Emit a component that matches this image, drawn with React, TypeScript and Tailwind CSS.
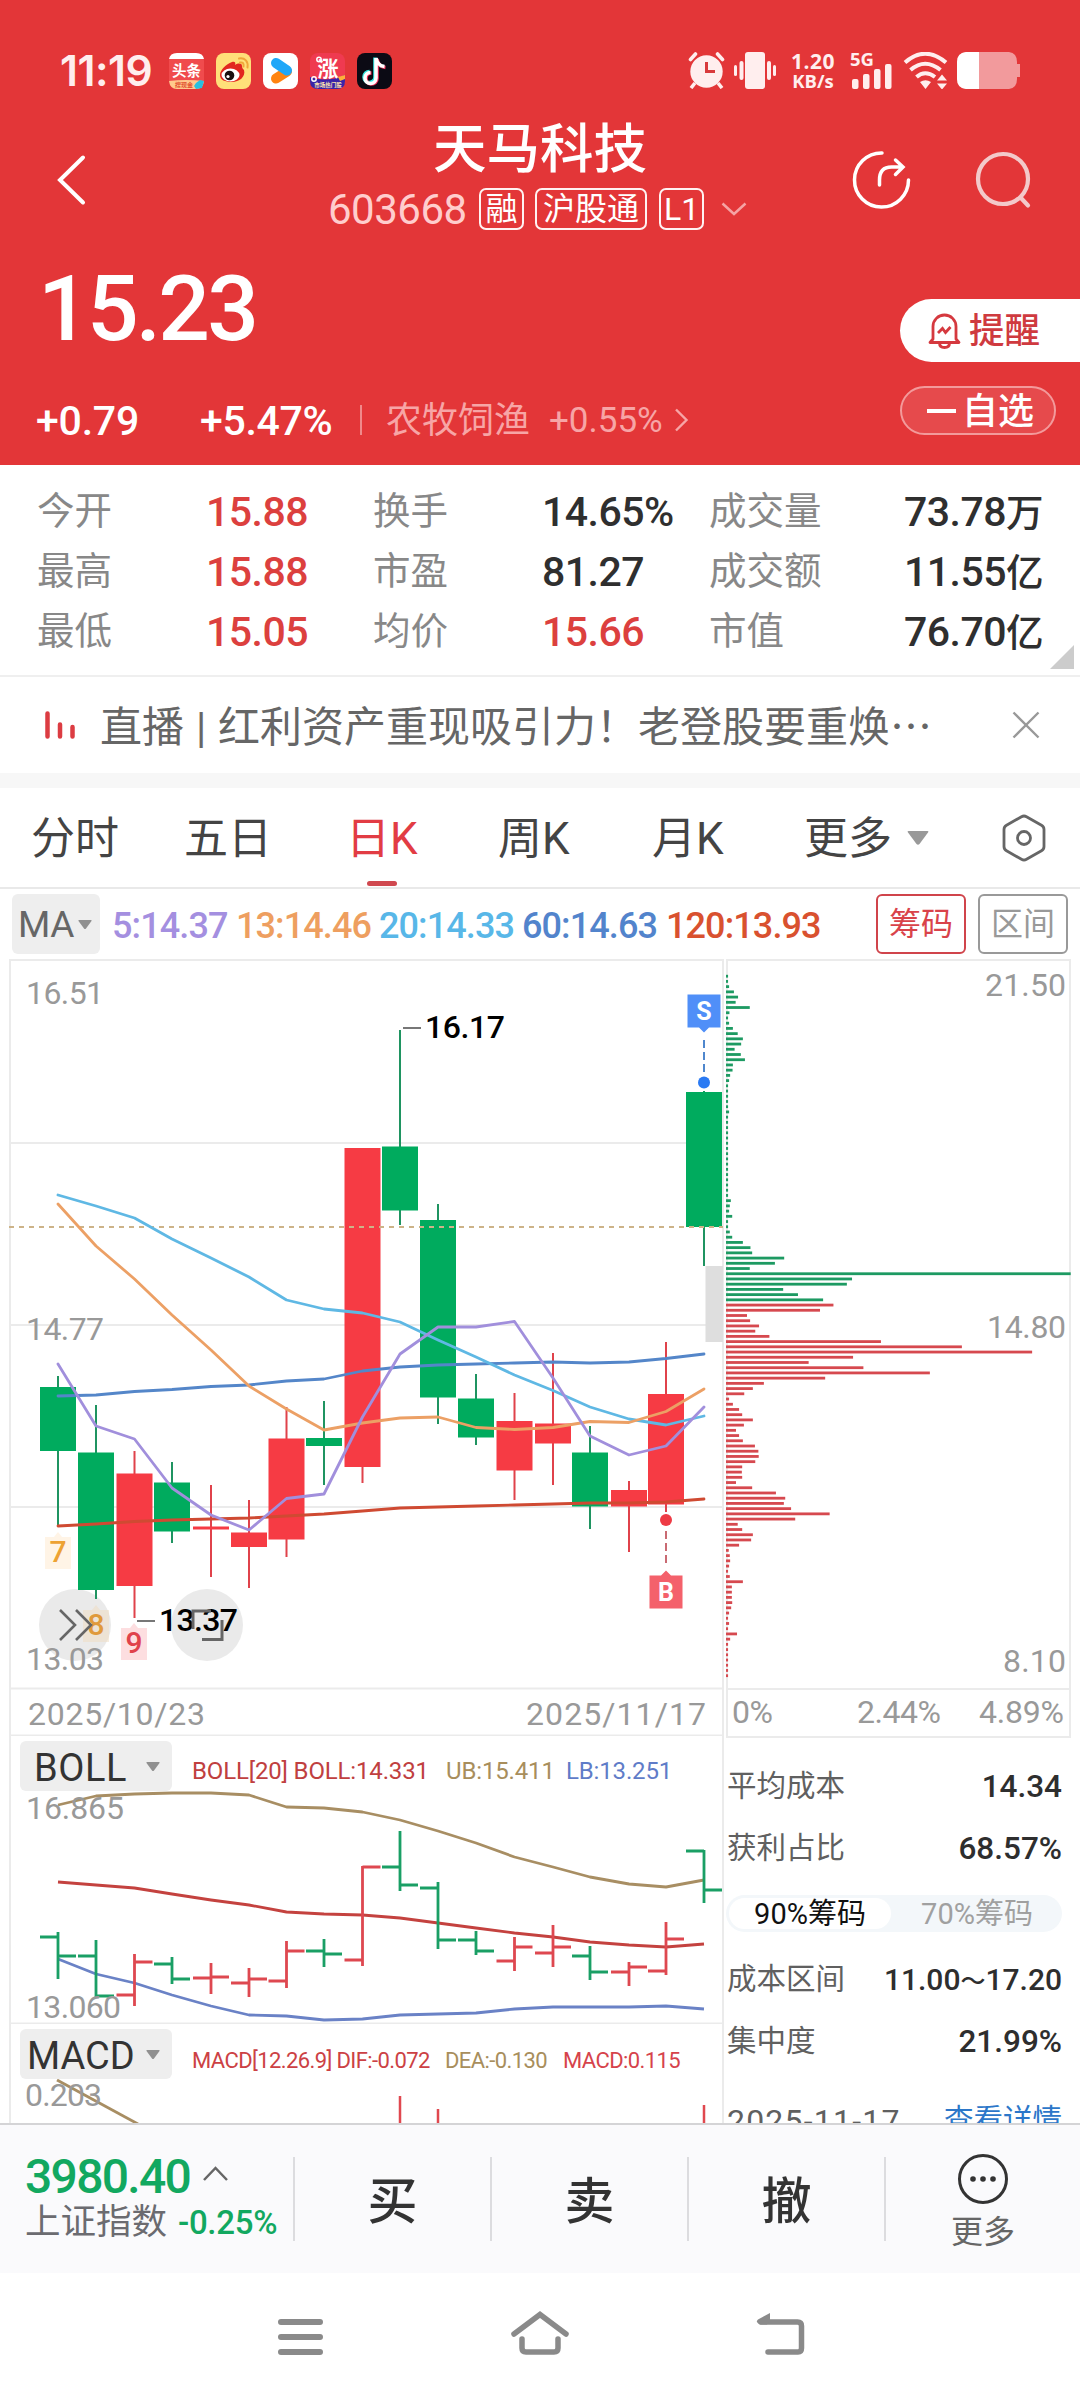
import React from "react";

const GREEN = "#00ab5e";
const RED = "#f63b44";
const LINE_GREEN = "#1d9a62";
const LINE_RED = "#d6494f";

const xs = [58, 96, 134.5, 172, 211, 249, 286.5, 324, 362.5, 400, 438, 476, 514.5, 553, 590, 629, 666, 704];

type Candle = { up: boolean; high: number; low: number; top: number; bottom: number };
const c = (up: boolean, high: number, low: number, top: number, bottom: number): Candle => ({ up, high, low, top, bottom });

const candles: Candle[] = [
  c(false, 1376, 1525, 1387, 1451),
  c(false, 1405, 1599, 1452.5, 1590),
  c(true, 1451, 1618, 1473.5, 1586),
  c(false, 1462, 1543, 1482.5, 1531.5),
  c(true, 1485, 1577, 1526.5, 1529.5),
  c(true, 1500, 1588, 1532.5, 1547),
  c(true, 1407, 1557, 1438.5, 1539.5),
  c(false, 1401, 1485, 1438, 1446),
  c(true, 1148, 1483, 1148, 1467),
  c(false, 1030, 1225, 1146.5, 1210.5),
  c(false, 1204, 1424, 1220, 1397.5),
  c(false, 1374, 1445, 1398.5, 1437.5),
  c(true, 1393, 1500, 1421, 1470.5),
  c(true, 1353, 1485, 1423.5, 1443.5),
  c(false, 1426, 1529, 1452.5, 1506.5),
  c(true, 1481, 1552, 1490, 1506.5),
  c(true, 1342, 1512, 1394, 1504.5),
  c(false, 1091, 1266, 1092, 1227),
];

const averages = [
  { color: "#cf4a32", y: [1526, 1524, 1521.5, 1520, 1519, 1518, 1516, 1514, 1511, 1508, 1507, 1506, 1505, 1504, 1503, 1503, 1502, 1499] },
  { color: "#5486c9", y: [1396, 1395, 1391.5, 1389.5, 1386.5, 1385, 1381, 1379, 1371, 1367, 1365, 1364, 1363, 1362, 1363, 1362, 1358.5, 1354] },
  { color: "#5fb8e4", y: [1195, 1206, 1218, 1239, 1258, 1277, 1300, 1309, 1313, 1322, 1340, 1357, 1375, 1390.5, 1407, 1419, 1425, 1416] },
  { color: "#eca065", y: [1204, 1246, 1279, 1315, 1350, 1386, 1409, 1430, 1423, 1418, 1417, 1427.5, 1429.5, 1427.5, 1421.5, 1422.5, 1411.5, 1389] },
  { color: "#a18fdc", y: [1364, 1426, 1439, 1488, 1515, 1530, 1498.5, 1494, 1417, 1354, 1327, 1327, 1321.5, 1378, 1436, 1455, 1446, 1407] },
];

const bollLines = [
  { color: "#a88e63", y: [1805, 1796, 1794, 1793, 1793, 1795, 1807, 1808, 1812, 1820, 1831, 1843, 1857, 1867, 1877, 1884, 1887, 1880] },
  { color: "#c4423f", y: [1882, 1885, 1888, 1894, 1900, 1905, 1912, 1914, 1915, 1918, 1923, 1928, 1933, 1937, 1942, 1945, 1947, 1944] },
  { color: "#6a82c6", y: [1959, 1974, 1983, 1995, 2006, 2015, 2016, 2020, 2019, 2015, 2014, 2013, 2009, 2007, 2007, 2007, 2006, 2009] },
];

// open, high, low, close
const ohlc: [boolean, number, number, number, number][] = [
  [false, 1937, 1933, 1978, 1956],
  [false, 1956, 1941, 1996, 1996],
  [true, 1995, 1955, 2005, 1962],
  [false, 1964, 1958, 1983, 1979],
  [true, 1978, 1964, 1993, 1977],
  [true, 1983, 1969, 1996, 1979],
  [true, 1981, 1942, 1987, 1951],
  [false, 1951, 1940, 1966, 1954],
  [true, 1960, 1867, 1965, 1867],
  [false, 1867, 1832, 1890, 1885],
  [false, 1888, 1883, 1948, 1940],
  [false, 1940, 1932, 1954, 1951],
  [true, 1961, 1938, 1970, 1947],
  [true, 1953, 1926, 1966, 1947],
  [false, 1956, 1947, 1979, 1972],
  [true, 1972, 1963, 1985, 1967],
  [true, 1971, 1923, 1974, 1939],
  [false, 1851, 1851, 1902, 1890],
];

const chips = [
  6, 6, 9, 23, 35, 28, 69, 10, 6, 9, 20, 34, 49, 44, 25, 43, 55, 20, 19, 12, 9, 6, 6, 6, 6, 6, 9, 6, 6, 6, 6, 6, 6, 6, 6, 6, 6, 6, 6,
  6, 6, 6, 6, 14, 11, 9, 18, 6, 6, 11, 18, 49, 71, 76, 169, 142, 69, 1001, 366, 351, 166, 209, 282, 312, 273, 61, 70, 96, 85, 126, 450,
  685, 889, 369, 240, 399, 592, 288, 110, 78, 53, 9, 20, 38, 47, 78, 52, 29, 38, 49, 84, 94, 95, 85, 47, 46, 47, 29, 76, 145, 172, 168,
  189, 301, 201, 34, 47, 78, 73, 38, 8, 11, 12, 9, 6, 11, 49, 17, 17, 17, 18, 15, 9, 6, 9, 6, 32, 12, 6, 6, 6, 6, 6, 6, 6,
];

const points = (ys: number[]) => ys.map((y, i) => `${xs[i]},${y}`).join(" ");

function ChartText({ x, y, w, size = 32, fill = "#999", weight = 400, children }: {
  x: number; y: number; w: number; size?: number; fill?: string; weight?: number; children: string;
}) {
  return (
    <text x={x} y={y} textLength={w} fontSize={size} fill={fill} fontWeight={weight}>
      {children}
    </text>
  );
}

function Badge({ x, y, bg, fg, children }: { x: number; y: number; bg: string; fg: string; children: string }) {
  return (
    <g>
      <path d={`M${x - 13} ${y + 5} h9 l4 -5 l4 5 h9 v32 h-26 z`} fill={bg} />
      <text x={x} y={y + 30} textAnchor="middle" fontSize="30" fill={fg} fontWeight="500">{children}</text>
    </g>
  );
}

function KLineChart() {
  return (
    <svg className="block" width="724" height="778" viewBox="0 958 724 778">
      <g stroke="#ebebeb" strokeWidth="2" fill="none">
        <path d="M9 960H724M10 1143H723M10 1325H723M10 1507H723M10 1688.5H723M10 1735.5H723M10 959V1736M723 959V1736" />
      </g>
      <rect x="705.5" y="1266" width="17.5" height="76" fill="#dedede" />
      <circle cx="75" cy="1625" r="36" fill="#eaeaea" />
      <circle cx="207" cy="1625" r="36" fill="#eaeaea" />
      <Badge x={58} y={1532} bg="#fff4e6" fg="#eda233">7</Badge>
      <Badge x={96} y={1605} bg="#efdcc080" fg="#e09a3c">8</Badge>
      <Badge x={134} y={1623} bg="#fddee0" fg="#e0424b">9</Badge>
      {candles.map((k, i) => (
        <g key={i} fill={k.up ? RED : GREEN}>
          <rect x={xs[i] - 1} y={k.high} width="2" height={k.low - k.high} fill={k.up ? "#e0424b" : "#1f9461"} />
          <rect x={xs[i] - 18} y={k.top} width="36" height={k.bottom - k.top} />
        </g>
      ))}
      <path d="M9 1227H723" stroke="#cdb388" strokeWidth="2" strokeDasharray="5 5" />
      {averages.map((l) => (
        <polyline key={l.color} points={points(l.y)} fill="none" stroke={l.color} strokeWidth="2.8" strokeLinejoin="round" strokeLinecap="round" />
      ))}
      <path d="M60 1610l15 15-15 15M76 1610l15 15-15 15" fill="none" stroke="#666" strokeWidth="2.6" />
      <ChartText x={26} y={1004} w={78}>16.51</ChartText>
      <ChartText x={26} y={1340} w={78}>14.77</ChartText>
      <ChartText x={26} y={1670} w={78}>13.03</ChartText>
      <ChartText x={28} y={1725} w={177}>2025/10/23</ChartText>
      <ChartText x={526} y={1725} w={180}>2025/11/17</ChartText>
      <path d="M403 1028h18M137 1621h18" stroke="#777" strokeWidth="2" />
      <ChartText x={425} y={1038} w={80} fill="#000" weight={500}>16.17</ChartText>
      <ChartText x={159} y={1631} w={79} fill="#000" weight={500}>13.37</ChartText>
      <path d="M193 1629v-18h18M222 1620v19.500h-20" fill="none" stroke="#666" strokeWidth="3" />
      <path d="M687.500 994.500h33v33h-11.500l-5 5-5-5h-11.500z" fill="#508ff8" />
      <path d="M704 1040v36" stroke="#4f87cd" strokeWidth="2" strokeDasharray="8 4" />
      <circle cx="704" cy="1082.500" r="6" fill="#2a7af3" />
      <text x="704" y="1020" fontSize="25" fontWeight="700" fill="#fff" textAnchor="middle">S</text>
      <circle cx="666" cy="1520" r="6" fill="#ee3b45" />
      <path d="M666 1531v35" stroke="#c96a72" strokeWidth="2" strokeDasharray="8 4" />
      <path d="M649.500 1575.500h11.500l5-5 5 5h11.500v33h-33z" fill="#f4616b" />
      <text x="666" y="1601" fontSize="25" fontWeight="700" fill="#fff" textAnchor="middle">B</text>
    </svg>
  );
}

function ChipChart() {
  return (
    <svg className="block" width="356" height="780" viewBox="724 958 356 780">
      <path d="M726 960H1071M727 959V1738M1070 959V1738M726 1689H1071M726 1737H1071" fill="none" stroke="#ebebeb" strokeWidth="2" />
      {chips.map((v, i) => (
        <rect key={i} x="726" y={974.8 + i * 5.22} width={v / 2.904} height="2.800" fill={i < 63 ? LINE_GREEN : LINE_RED} />
      ))}
      <ChartText x={985} y={996} w={81}>21.50</ChartText>
      <ChartText x={987} y={1338} w={79}>14.80</ChartText>
      <ChartText x={1003} y={1672} w={63}>8.10</ChartText>
      <ChartText x={732} y={1723} w={41}>0%</ChartText>
      <ChartText x={857} y={1723} w={84}>2.44%</ChartText>
      <ChartText x={979} y={1723} w={85}>4.89%</ChartText>
    </svg>
  );
}

function Caret({ className }: { className?: string }) {
  return (
    <svg className={className} width="14" height="9" viewBox="0 0 14 9">
      <path d="M1 0h12q1 0 .5 1L8 8.500q-1 1-2 0L.5 1Q0 0 1 0z" fill="#909090" />
    </svg>
  );
}

function IndicatorButton({ name, text }: { name: string; text: string }) {
  return (
    <div className="flex h-[50px] w-[152px] items-center justify-between rounded-md bg-[#eeeeee] pr-3">
      <span className={`pt-[4px] text-[38px] leading-none text-[#333] ${text}`}>{name}</span>
      <Caret />
    </div>
  );
}

function BollPane() {
  return (
    <div className="relative h-[288px]">
      <svg className="absolute inset-0" width="724" height="288" viewBox="0 1736 724 288">
        <path d="M10 1736V2024M723 1736V2024M10 2023.500H723" stroke="#ebebeb" strokeWidth="2" />
        {bollLines.map((l) => (
          <polyline key={l.color} points={points(l.y)} fill="none" stroke={l.color} strokeWidth="2.800" strokeLinejoin="round" />
        ))}
        {ohlc.map(([up, o, h, l, cl], i) => (
          <path key={i} d={`M${xs[i] - 18} ${o}H${xs[i]}M${xs[i]} ${cl}h18M${xs[i]} ${h - 1}V${l + 1}`} fill="none" stroke={up ? "#de4850" : "#1a9f65"} strokeWidth="2.800" />
        ))}
        <ChartText x={26} y={1819} w={98}>16.865</ChartText>
        <ChartText x={26} y={2018} w={95}>13.060</ChartText>
      </svg>
      <div className="relative flex pl-5 pt-[5px]">
        <IndicatorButton name="BOLL" text="pl-[14px] tracking-[0.600px]" />
        <div className="ml-5 flex items-center whitespace-pre pt-[10px] text-[24px] leading-none tracking-[-0.150px]">
          <span className="w-[254px] text-[#c0403f]">BOLL[20] BOLL:14.331</span>
          <span className="w-[120px] text-[#a88e5c]">UB:15.411</span>
          <span className="text-[#5f7cc8]">LB:13.251</span>
        </div>
      </div>
    </div>
  );
}

function MacdPane() {
  return (
    <div className="relative h-[99px]">
      <svg className="absolute inset-0" width="724" height="99" viewBox="0 2024 724 99">
        <path d="M10 2024V2123M723 2024V2123" stroke="#ebebeb" strokeWidth="2" />
        <path d="M57 2080L138 2124" stroke="#a88e63" strokeWidth="2.800" />
        <path d="M400 2096V2123M438 2109V2123M704 2105V2123" stroke="#e0484f" strokeWidth="2.500" />
        <ChartText x={25} y={2106} w={77}>0.203</ChartText>
      </svg>
      <div className="relative flex pl-5 pt-[5px]">
        <IndicatorButton name="MACD" text="pl-[7px]" />
        <div className="ml-5 flex items-center whitespace-pre pt-[13px] text-[22px] leading-none tracking-[-0.600px]">
          <span className="w-[253px] text-[#cc4144]">MACD[12.26.9] DIF:-0.072</span>
          <span className="w-[118px] text-[#a88e5c]">DEA:-0.130</span>
          <span className="text-[#d6434b]">MACD:0.115</span>
        </div>
      </div>
    </div>
  );
}

function InfoRow({ label, children }: { label: string; children: React.ReactNode }) {
  return (
    <div className="flex h-[62px] items-center justify-between">
      <span className="text-[29.5px] leading-none text-[#606060]">{label}</span>
      {children}
    </div>
  );
}

function ChipPanel() {
  const value = "text-[31.5px] font-medium leading-none text-[#2e2e2e]";
  return (
    <div className="ml-[3px] w-[335px] pt-[18px]">
      <InfoRow label="平均成本"><span className={value}>14.34</span></InfoRow>
      <InfoRow label="获利占比"><span className={value}>68.57%</span></InfoRow>
      <div className="-ml-px mt-[15px] flex h-[37px] w-[336px] items-center rounded-full bg-[#f3f7fa] px-[3px] text-[29px] leading-none">
        <div className="flex h-[31px] w-[162px] items-center justify-center rounded-full bg-white pt-[2px] text-[#111]">90%筹码</div>
        <div className="flex flex-1 items-center justify-center pl-[4px] pt-[2px] text-[#a0a0a0]">70%筹码</div>
      </div>
      <div className="mt-[17px]">
        <InfoRow label="成本区间">
          <span className="text-[30px] font-medium leading-none text-[#2e2e2e]">11.00<span className="text-[25px]">～</span>17.20</span>
        </InfoRow>
        <InfoRow label="集中度"><span className={value}>21.99%</span></InfoRow>
      </div>
      <div className="mt-[17px] flex h-[62px] items-center justify-between">
        <span className="text-[32px] leading-none tracking-[1.200px] text-[#606060]">2025-11-17</span>
        <span className="text-[29.5px] leading-none text-[#2c77c9]">查看详情</span>
      </div>
    </div>
  );
}

function StatusBar() {
  return (
    <div className="flex h-[89px] items-end pl-[60px] text-[#ffeeee]">
      <div className="flex h-[36px] w-[109px] items-center font-['Inter'] text-[42.500px] font-semibold leading-none tracking-[-0.500px]">11:19</div>
      <div className="flex h-[36px] gap-[12px]">
        <svg width="35" height="36" viewBox="0 0 35 36">
          <rect width="35" height="36" rx="8" fill="#f04b4d" />
          <path d="M0 6Q1 0 8 0h19q7 0 8 6z" fill="#fff" />
          <path d="M0 28q17-2 35 0-1 8-8 8H8q-7 0-8-8z" fill="#ffc98d" />
          <text x="17.500" y="22.500" textAnchor="middle" fontSize="14.500" fontWeight="700" fill="#fff">头条</text>
          <text x="15" y="34" textAnchor="middle" fontSize="6" fontWeight="700" fill="#e2502f">搜现金</text>
          <path d="M27 30l4-3 4 1-2 7-6 1-2-3z" fill="#27bfe0" />
        </svg>
        <svg width="35" height="36" viewBox="0 0 35 36">
          <rect width="35" height="36" rx="8" fill="#ffdf79" />
          <path d="M4 22c0-5 6-11 12-13 3-1 4 1 3 3 3-2 7-2 7 1 0 2 1 3 2 4 2 7-5 12-12 12S4 27 4 22z" fill="#e2261f" />
          <ellipse cx="14.500" cy="22" rx="9" ry="6.500" fill="#fff" />
          <circle cx="13.500" cy="22.500" r="4.800" fill="#1a1010" />
          <circle cx="12" cy="23.500" r="1.600" fill="#fff" />
          <path d="M23 5.500c6-1 9.500 3 8.500 9M24 9.500c3-.5 4 1 3.500 4" fill="none" stroke="#f0a63a" strokeWidth="2" strokeLinecap="round" />
        </svg>
        <svg width="35" height="36" viewBox="0 0 35 36">
          <rect width="35" height="36" rx="8" fill="#fff" />
          <path d="M13 25.500L24 18.500" stroke="#ff8411" strokeWidth="10" strokeLinecap="round" />
          <path d="M13 10l11 7.500" stroke="#1fa7f8" strokeWidth="10" strokeLinecap="round" />
        </svg>
        <svg width="35" height="36" viewBox="0 0 35 36">
          <rect width="35" height="36" rx="8" fill="#ef3a50" />
          <path d="M0 24q17 6 35-2v6q0 8-8 8H8q-8 0-8-8z" fill="#3a24a8" />
          <path d="M28 24l7-2v4l-5 2z" fill="#ffb03a" />
          <text x="18" y="22.500" textAnchor="middle" fontSize="21" fontWeight="700" fill="#fff">涨</text>
          <text x="18" y="34" textAnchor="middle" fontSize="5.500" fontWeight="700" fill="#ffe9b0">市场热门股</text>
          <circle cx="4" cy="26" r="2.200" fill="none" stroke="#fff" strokeWidth="1.500" />
          <circle cx="9" cy="6.500" r="2.200" fill="none" stroke="#fff" strokeWidth="1.500" />
        </svg>
        <svg width="35" height="36" viewBox="0 0 35 36">
          <rect width="35" height="36" rx="8" fill="#0b0a14" />
          <g fill="none" strokeWidth="3.600">
            <path d="M18 4.500v19.500a5.500 5.500 0 1 1-5.500-5.500M18 5c1 5 4 8 8.500 8.500" stroke="#33e6e0" />
            <path d="M20 6v19.500a5.500 5.500 0 1 1-5.500-5.500M20 6c1 5 4 8 8.500 8.500" stroke="#f5305a" />
            <path d="M19 5v20a5.500 5.500 0 1 1-5.500-5.500M19 5c1 5 4 8 8.500 8.500" stroke="#fff" />
          </g>
        </svg>
      </div>
      <div className="ml-auto mr-[59px] flex h-[37px]">
        <svg width="38" height="37" viewBox="0 0 38 37">
          <circle cx="18.500" cy="19.500" r="16.200" fill="#ffeeee" />
          <path d="M2.500 7.500l5-5.500M34.500 7.500l-5-5.500" stroke="#ffeeee" strokeWidth="3.600" strokeLinecap="round" />
          <path d="M7 31l-4 5M30 31l4 5" stroke="#ffeeee" strokeWidth="3.600" />
          <path d="M18.500 10v9.500h8.500" fill="none" stroke="#d9393c" strokeWidth="3" />
        </svg>
        <svg className="ml-[8px]" width="43" height="37" viewBox="0 0 43 37" fill="#ffeeee">
          <rect x="11" width="20" height="37" rx="3" />
          <rect x="5.500" y="9" width="4" height="19" rx="2" /><rect y="13" width="3" height="11" rx="1.500" />
          <rect x="33" y="9" width="4" height="19" rx="2" /><rect x="39" y="13" width="3" height="11" rx="1.500" />
        </svg>
        <div className="ml-[11px] flex w-[50px] flex-col text-center font-['Open_Sans'] font-bold leading-none">
          <span className="h-[18px] text-[21px] leading-[18px] tracking-[0.500px]">1.20</span>
          <span className="h-[19px] text-[18.500px] leading-[21px]">KB/s</span>
        </div>
        <svg className="ml-[12px] overflow-visible" width="44" height="37" viewBox="0 0 44 37" fill="#ffeeee">
          <text x="0" y="14" fontSize="18.500" fontWeight="700" className="font-['Open_Sans']">5G</text>
          <rect x="2" y="27" width="6.500" height="10" rx="2" /><rect x="13" y="22" width="6.500" height="15" rx="2" />
          <rect x="24" y="17" width="6.500" height="20" rx="2" /><rect x="35" y="12" width="6.500" height="25" rx="2" />
        </svg>
        <svg className="ml-[9px]" width="46" height="37" viewBox="0 0 46 37" fill="none" stroke="#ffeeee" strokeWidth="4">
          <path d="M2 10.500Q22 -7 43 10.500M7.500 18Q22 5.500 37.500 18M13.500 25Q22 17.500 32 25" />
          <path d="M17 30q5.500-3.500 11 0l-5.500 7z M34 28.500l5-6 5 6zM34 31.500l5 6 5-6z" fill="#ffeeee" stroke="none" />
        </svg>
        <svg className="ml-[8px]" width="64" height="37" viewBox="0 0 64 37">
          <path d="M9 0H52q8 1 8 10v2h3v13h-3v2q0 9-8 10H9Q0 36 0 27V10Q0 1 9 0z" fill="#f29a9c" />
          <path d="M22 0H9Q0 1 0 10v17q0 9 9 10h13z" fill="#fff" />
        </svg>
      </div>
    </div>
  );
}

function Tag({ children, className }: { children: string; className: string }) {
  return (
    <div className={`flex h-[42px] items-center justify-center rounded-[7px] border-2 border-[#fff2f2] pt-px text-[32px] leading-none text-white ${className}`}>{children}</div>
  );
}

function Header() {
  return (
    <header className="h-[465px] bg-[#e33638]">
      <StatusBar />
      <div className="flex h-[156px]">
        <svg className="ml-[56px] mt-[65px]" width="32" height="52" viewBox="0 0 32 52">
          <path d="M27 3.500L4 26l23 22.500" fill="none" stroke="#fff" strokeWidth="4" strokeLinecap="round" />
        </svg>
        <div className="ml-[212px] w-[480px] pt-[31px]">
          <h1 className="text-center text-[53.500px] font-medium leading-[60px] text-white">天马科技</h1>
          <div className="mt-[6px] flex items-center pl-[28px]">
            <span className="w-[151px] pt-[3px] text-[42px] leading-none tracking-[-0.500px] text-[#ffcdcd]">603668</span>
            <Tag className="w-[45px]">融</Tag>
            <Tag className="ml-[11px] w-[112px]">沪股通</Tag>
            <Tag className="ml-[12px] w-[45px]">L1</Tag>
            <svg className="ml-[17px]" width="26" height="14" viewBox="0 0 26 14">
              <path d="M1.500 1.500L13 12 24.500 1.500" fill="none" stroke="#f5a3a4" strokeWidth="2.500" />
            </svg>
          </div>
        </div>
        <svg className="ml-[71px] mt-[61px]" width="60" height="60" viewBox="0 0 60 60" fill="none" stroke="#fff" strokeWidth="3.500" strokeLinecap="round">
          <path d="M31 3A27 27 0 1 0 57.500 30" />
          <path d="M28.500 35v-5q0-13 12-13h11M44.500 10l7.500 7-7.500 7.500" />
        </svg>
        <svg className="ml-[62px] mt-[61px]" width="60" height="60" viewBox="0 0 60 60" fill="none" stroke="#f3c9ca" strokeWidth="4.200" strokeLinecap="round">
          <circle cx="30" cy="29" r="25" />
          <path d="M48 48l7 7.500" />
        </svg>
      </div>
      <div className="flex h-[124px] justify-between">
        <div className="flex items-center pl-[38px] pt-[5px] text-[91px] font-medium leading-none tracking-[-2.800px] text-white">15.23</div>
        <div className="mt-[54px] flex h-[63px] w-[180px] items-center rounded-l-full bg-white pl-[28px]">
          <svg width="33" height="36" viewBox="0 0 33 36" fill="none" stroke="#d5393f" strokeWidth="2.800">
            <path d="M5 26V13.500a11.500 11.500 0 0 1 23 0V26l3 3.500H2z" strokeLinejoin="round" />
            <path d="M11.500 30q0 4.500 5 4.500t5-4.500M10 20l4.500-4.500 3 4 5-5.500" />
          </svg>
          <span className="ml-[8px] pt-[3px] text-[35.500px] font-medium leading-none text-[#cf3a3f]">提醒</span>
        </div>
      </div>
      <div className="flex h-[96px] items-start pl-[36px] text-white">
        <div className="mt-[31px] flex h-[40px] items-center leading-none">
          <span className="w-[164px] pt-[2px] text-[41px] font-medium tracking-[-0.200px]">+0.79</span>
          <span className="w-[160px] pt-[2px] text-[41px] font-medium tracking-[-0.300px]">+5.47%</span>
          <i className="block h-[30px] w-[2px] bg-[#f0898a]" />
          <span className="ml-[24px] w-[163px] pt-[2px] text-[36px] text-[#f7a5a6]">农牧饲渔</span>
          <span className="w-[125px] pt-px text-[35px] text-[#f7a5a6]">+0.55%</span>
          <svg width="15" height="24" viewBox="0 0 15 24">
            <path d="M2 1.500L12.500 12 2 22.500" fill="none" stroke="#f7a5a6" strokeWidth="2.400" />
          </svg>
        </div>
        <div className="ml-auto mr-[24px] mt-[17px] flex h-[49px] w-[156px] items-center rounded-full border-2 border-[#f39a9b] bg-[#e64a4c] pl-[25px]">
          <i className="block h-[4px] w-[29px] bg-white" />
          <span className="ml-[6px] pt-[2px] text-[36px] font-medium leading-none">自选</span>
        </div>
      </div>
    </header>
  );
}

const stats: [string, string, boolean][][] = [
  [["今开", "15.88", true], ["换手", "14.65%", false], ["成交量", "73.78万", false]],
  [["最高", "15.88", true], ["市盈", "81.27", false], ["成交额", "11.55亿", false]],
  [["最低", "15.05", true], ["均价", "15.66", true], ["市值", "76.70亿", false]],
];

function Stats() {
  return (
    <section className="relative h-[210px] pt-[17px]">
      {stats.map((row, r) => (
        <div key={r} className="grid h-[60px] grid-cols-[169px_167px_169px_167px_334px] items-center pl-[37px] leading-none">
          {row.map(([label, value, red], i) => (
            <React.Fragment key={label}>
              {i < 2 ? (
                <>
                  <span className="text-[37.500px] text-[#888]">{label}</span>
                  <span className={`text-[41px] font-medium tracking-[-0.500px] ${red ? "text-[#dc403e]" : "text-[#2f2f2f]"}`}>{value}</span>
                </>
              ) : (
                <div className="flex items-center justify-between">
                  <span className="text-[37.500px] text-[#888]">{label}</span>
                  <span className="text-[41px] font-medium tracking-[-0.500px] text-[#2f2f2f]">
                    {value.slice(0, -1)}
                    <span className="text-[37.500px]">{value.slice(-1)}</span>
                  </span>
                </div>
              )}
            </React.Fragment>
          ))}
        </div>
      ))}
      <svg className="absolute right-[6px] top-[180px]" width="24" height="24" viewBox="0 0 24 24">
        <path d="M24 0v24H0z" fill="#ccc" />
      </svg>
    </section>
  );
}

function NewsBanner() {
  return (
    <section className="flex h-[98px] items-center border-t-2 border-[#efefef] pl-[44px]">
      <svg width="32" height="28" viewBox="0 0 32 28" fill="none" stroke="#dc3c42" strokeWidth="4.500" strokeLinecap="round">
        <path d="M3.500 2.500v23M16 13.500v12M28.500 16v9.500" />
      </svg>
      <p className="ml-[24px] w-[840px] whitespace-pre pt-px text-[42px] leading-none text-[#666] [word-spacing:1.500px]">直播 | 红利资产重现吸引力！老登股要重焕<span className="font-['Noto_Sans_CJK_SC']">⋯</span></p>
      <svg className="ml-[72px]" width="28" height="28" viewBox="0 0 28 28">
        <path d="M1.500 1.500l25 25M26.500 1.500l-25 25" stroke="#999" strokeWidth="2.400" />
      </svg>
    </section>
  );
}

function Tabs() {
  return (
    <nav className="flex h-[101px] items-center border-b-2 border-[#e9e9e9] pl-[31px] pt-[3px] text-[44px] leading-none text-[#444]">
      <span className="w-[153px]">分时</span>
      <span className="w-[162px]">五日</span>
      <div className="relative w-[152px] text-[#e23c44]">
        日K
        <i className="absolute left-[21px] top-[64px] block h-[5px] w-[30px] rounded-sm bg-[#d0484f]" />
      </div>
      <span className="w-[154px]">周K</span>
      <span className="w-[152px]">月K</span>
      <span className="w-[103px]">更多</span>
      <svg className="-mt-[3px]" width="22" height="14" viewBox="0 0 22 14">
        <path d="M1.500 0h19q1.500 0 .5 1.500L12.500 13q-1.500 1.500-3 0L1 1.500Q0 0 1.500 0z" fill="#999" />
      </svg>
      <svg className="-mt-[3px] ml-[73px]" width="44" height="48" viewBox="0 0 44 48" fill="none" stroke="#666" strokeWidth="2.800">
        <path d="M19.500 2.700q2.500-1.400 5 0l15 8.600q2.500 1.400 2.500 4.200v17q0 2.800-2.500 4.200l-15 8.600q-2.500 1.400-5 0l-15-8.600Q2 35.300 2 32.500v-17q0-2.800 2.500-4.200z" />
        <circle cx="22" cy="24" r="6.500" />
      </svg>
    </nav>
  );
}

function MaBar() {
  return (
    <div className="flex h-[69px] items-start pl-[12px] pt-[5px] leading-none">
      <div className="flex h-[60px] w-[88px] items-center rounded-md bg-[#eeeeee] pl-[6px]">
        <span className="w-[60px] text-[37px] tracking-[-0.500px] text-[#666]">MA</span>
        <Caret />
      </div>
      <div className="flex h-[63px] items-center pl-[12px] text-[36px] font-medium tracking-[-0.900px]">
        <span className="w-[124px] text-[#a48fe0]">5:14.37</span>
        <span className="w-[143px] text-[#ee9f60]">13:14.46</span>
        <span className="w-[143px] text-[#58b7e8]">20:14.33</span>
        <span className="w-[144px] text-[#5284cc]">60:14.63</span>
        <span className="w-[210px] text-[#d9512f]">120:13.93</span>
      </div>
      <div className="flex h-[60px] w-[90px] items-center justify-center rounded-md border-2 border-[#d0444b] text-[32px] text-[#d9434a]">筹码</div>
      <div className="ml-[12px] flex h-[60px] w-[90px] items-center justify-center rounded-md border-2 border-[#999] text-[32px] text-[#999]">区间</div>
    </div>
  );
}

function BottomBar() {
  return (
    <footer className="flex h-[150px] border-t-2 border-[#d4d4d6] bg-[#fafafc] leading-none">
      <div className="w-[293px] pl-[25px] pt-[29px]">
        <div className="flex h-[44px] items-center">
          <span className="w-[178px] pt-px text-[48px] font-medium tracking-[-1.700px] text-[#12a860]">3980.40</span>
          <svg className="mb-[6px]" width="25" height="15" viewBox="0 0 25 15">
            <path d="M1 14L12.500 2 24 14" fill="none" stroke="#666" strokeWidth="2.500" />
          </svg>
        </div>
        <div className="mt-[4px] flex h-[40px] items-center">
          <span className="w-[153px] pt-px text-[35.500px] text-[#6b6b70]">上证指数</span>
          <span className="text-[33px] font-medium tracking-[-0.300px] text-[#12a860]">-0.25%</span>
        </div>
      </div>
      {["买", "卖", "撤"].map((t) => (
        <div key={t} className="flex w-[197px] items-start pt-[32px]">
          <i className="block h-[84px] w-[2px] bg-[#dcdcdf]" />
          <span className="flex h-[90px] flex-1 items-center justify-center text-[50px] font-medium text-[#333]">{t}</span>
        </div>
      ))}
      <div className="flex flex-1 pt-[32px]">
        <i className="block h-[84px] w-[2px] bg-[#dcdcdf]" />
        <div className="flex flex-1 flex-col items-center">
          <svg className="-mt-[4px]" width="52" height="52" viewBox="0 0 52 52">
            <circle cx="26" cy="26" r="23.500" fill="none" stroke="#333" strokeWidth="3" />
            <g fill="#333"><circle cx="16" cy="26" r="2.800" /><circle cx="26" cy="26" r="2.800" /><circle cx="36" cy="26" r="2.800" /></g>
          </svg>
          <span className="mt-[11px] text-[32px] text-[#666]">更多</span>
        </div>
      </div>
    </footer>
  );
}

function SystemNav() {
  return (
    <div className="flex h-[127px] items-start pt-[36px]">
      <svg className="ml-[276px]" width="50" height="50" viewBox="276 2309 50 50" stroke="#8a8a8a" strokeWidth="6" strokeLinecap="round">
        <path d="M281 2322h39M281 2337h39M281 2352h39" />
      </svg>
      <svg className="ml-[182px]" width="64" height="50" viewBox="508 2309 64 50" fill="none" stroke="#8a8a8a" strokeWidth="5.500" strokeLinecap="round">
        <path d="M514 2334l26-19.500 26 19.500" strokeLinejoin="miter" />
        <path d="M522 2339v9q0 4 4 4h28q4 0 4-4v-9" />
      </svg>
      <svg className="ml-[180px]" width="56" height="50" viewBox="752 2309 56 50" fill="none" stroke="#8a8a8a" strokeWidth="5.500" strokeLinecap="round">
        <path d="M768 2352h30q3.500 0 3.500-4v-22q0-4-4-4H761" />
        <path d="M770 2313v7l-3 4.500h-7q-5-2-2-5z" fill="#8a8a8a" stroke="none" />
      </svg>
    </div>
  );
}

export default function App() {
  return (
    <div className="h-[2400px] w-[1080px] overflow-hidden bg-white font-['Roboto','Noto_Sans_CJK_SC',sans-serif]">
      <Header />
      <Stats />
      <NewsBanner />
      <div className="h-[15px] bg-[#f7f7f7]" />
      <Tabs />
      <MaBar />
      <main className="flex h-[1165px] overflow-hidden">
        <div className="w-[724px]">
          <KLineChart />
          <BollPane />
          <MacdPane />
        </div>
        <div className="w-[356px]">
          <ChipChart />
          <ChipPanel />
        </div>
      </main>
      <BottomBar />
      <SystemNav />
    </div>
  );
}
